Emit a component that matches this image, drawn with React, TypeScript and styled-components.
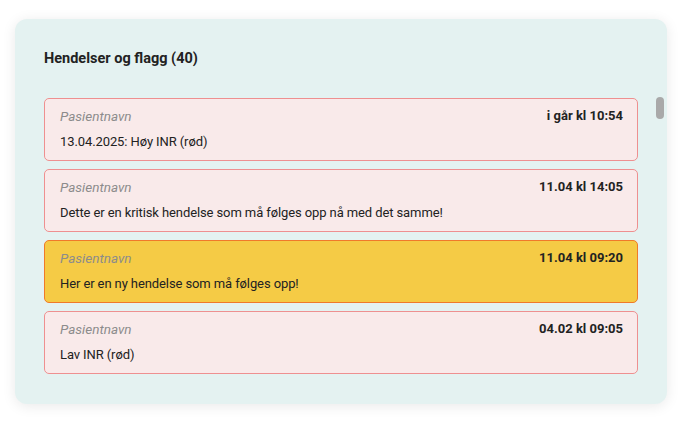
import React, { useRef, useState } from "react";
import styled, { createGlobalStyle } from "styled-components";

type Hendelse = {
  id: number;
  pasient: string;
  tid: string;
  tekst: string;
  ny?: boolean;
};

const first: Hendelse[] = [
  { id: 1, pasient: "Pasientnavn", tid: "i går kl 10:54", tekst: "13.04.2025: Høy INR (rød)" },
  {
    id: 2,
    pasient: "Pasientnavn",
    tid: "11.04 kl 14:05",
    tekst: "Dette er en kritisk hendelse som må følges opp nå med det samme!",
  },
  {
    id: 3,
    pasient: "Pasientnavn",
    tid: "11.04 kl 09:20",
    tekst: "Her er en ny hendelse som må følges opp!",
    ny: true,
  },
  { id: 4, pasient: "Pasientnavn", tid: "04.02 kl 09:05", tekst: "Lav INR (rød)" },
];

const hendelser: Hendelse[] = [
  ...first,
  ...Array.from({ length: 36 }, (_, i) => ({
    id: i + 5,
    pasient: "Pasientnavn",
    tid: "01.02 kl 08:00",
    tekst: "Lav INR (rød)",
  })),
];

const THUMB = 22;

const App = () => {
  const listRef = useRef<HTMLDivElement | null>(null);
  const [thumbTop, setThumbTop] = useState(0);

  const handleScroll = () => {
    const el = listRef.current;
    if (!el) return;
    const max = el.scrollHeight - el.clientHeight;
    const frac = max > 0 ? el.scrollTop / max : 0;
    setThumbTop(frac * (el.clientHeight - THUMB));
  };

  return (
    <>
      <GlobalStyle />
      <Page>
        <Panel>
          <Title>Hendelser og flagg ({hendelser.length})</Title>
          <ListArea>
            <List ref={listRef} onScroll={handleScroll}>
              {hendelser.map((h) => (
                <Card key={h.id} $ny={h.ny}>
                  <CardHeader>
                    <Name>{h.pasient}</Name>
                    <Time>{h.tid}</Time>
                  </CardHeader>
                  <Body>{h.tekst}</Body>
                </Card>
              ))}
            </List>
            <Thumb style={{ top: thumbTop }} />
          </ListArea>
        </Panel>
      </Page>
    </>
  );
};

export default App;

const GlobalStyle = createGlobalStyle`
  html, body {
    margin: 0;
    padding: 0;
    background: #ffffff;
  }
  body {
    font-family: Roboto, "Liberation Sans", sans-serif;
    color: #222;
  }
  * {
    box-sizing: border-box;
  }
`;

const Page = styled.div`
  padding: 19px 20px 21px 15px;
`;

const Panel = styled.section`
  width: 652px;
  height: 385px;
  display: flex;
  flex-direction: column;
  padding: 30px 3px 25px 29px;
  background: #e4f2f1;
  border-radius: 12px;
  box-shadow: 0 2px 14px rgba(0, 0, 0, 0.09);
`;

const Title = styled.h2`
  margin: 0 0 28px;
  font-size: 14.5px;
  line-height: 20px;
  font-weight: 700;
  color: #222;
`;

const ListArea = styled.div`
  position: relative;
  flex: 1;
  min-height: 0;
`;

const List = styled.div`
  height: 100%;
  overflow-y: auto;
  display: flex;
  flex-direction: column;
  gap: 8px;
  padding: 1px 26px 0 0;
  scrollbar-width: none;

  &::-webkit-scrollbar {
    display: none;
  }
`;

const Thumb = styled.div`
  position: absolute;
  right: 0;
  width: 8px;
  height: ${THUMB}px;
  border-radius: 4px;
  background: #a9a9a9;
  pointer-events: none;
`;

const Card = styled.article<{ $ny?: boolean }>`
  flex-shrink: 0;
  padding: 8px 14px 9px 15px;
  border: 1px solid ${({ $ny }) => ($ny ? "#f07a2a" : "#ee9090")};
  border-radius: 5px;
  background: ${({ $ny }) => ($ny ? "#f5cb45" : "#f9eaea")};
`;

const CardHeader = styled.div`
  display: flex;
  justify-content: space-between;
  align-items: center;
  margin-bottom: 8px;
`;

const Name = styled.span`
  font-size: 13.5px;
  line-height: 18px;
  font-style: italic;
  color: #8c8c8c;
`;

const Time = styled.span`
  font-size: 13px;
  line-height: 18px;
  font-weight: 700;
  color: #222;
`;

const Body = styled.p`
  margin: 0;
  font-size: 13px;
  line-height: 18px;
  letter-spacing: -0.1px;
  color: #222;
`;
